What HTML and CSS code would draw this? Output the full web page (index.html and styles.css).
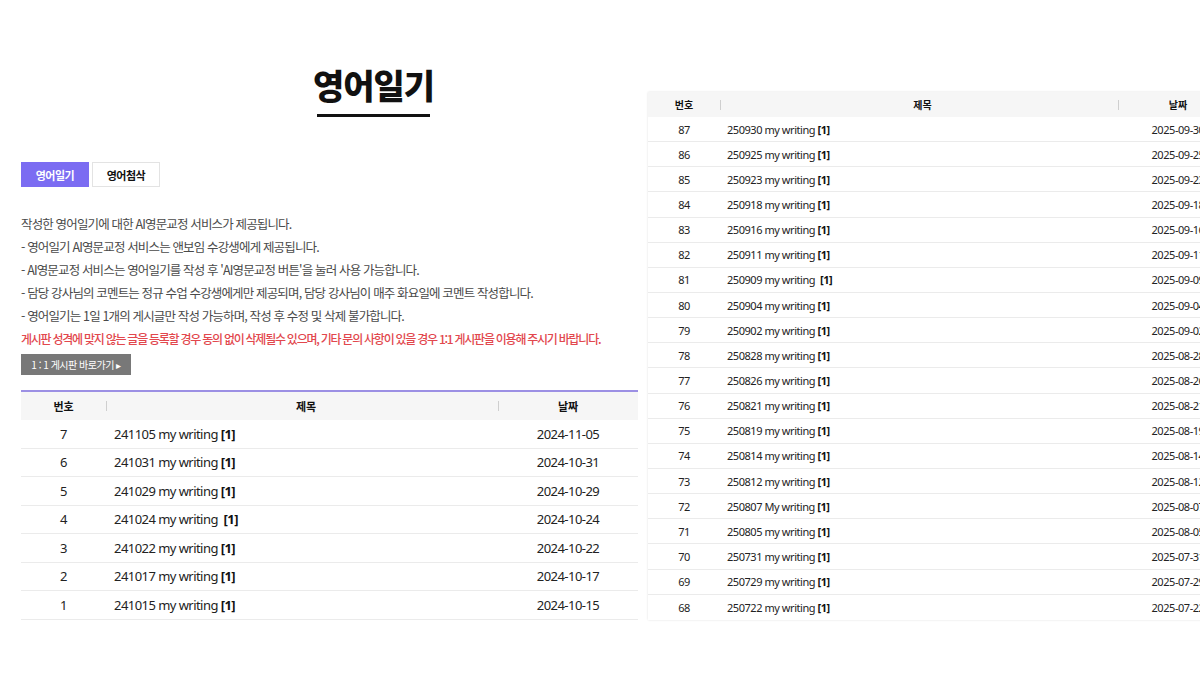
FILE: index.html
```html
<!DOCTYPE html>
<html lang="ko">
<head>
<meta charset="utf-8">
<title>영어일기</title>
<link rel="stylesheet" href="styles.css">
</head>
<body>
<div class="page">
  <section class="left">
    <div class="title-wrap">
      <h1 class="title">영어일기</h1>
      <div class="title-line"></div>
    </div>
    <div class="tabs">
      <div class="tab active">영어일기</div>
      <div class="tab">영어첨삭</div>
    </div>
    <div class="notes">
      <p>작성한 영어일기에 대한 AI영문교정 서비스가 제공됩니다.</p>
      <p>- 영어일기 AI영문교정 서비스는 앤보임 수강생에게 제공됩니다.</p>
      <p>- AI영문교정 서비스는 영어일기를 작성 후 'AI영문교정 버튼'을 눌러 사용 가능합니다.</p>
      <p>- 담당 강사님의 코멘트는 정규 수업 수강생에게만 제공되며, 담당 강사님이 매주 화요일에 코멘트 작성합니다.</p>
      <p>- 영어일기는 1일 1개의 게시글만 작성 가능하며, 작성 후 수정 및 삭제 불가합니다.</p>
      <p class="warn">게시판 성격에 맞지 않는 글을 등록할 경우 동의 없이 삭제될수 있으며, 기타 문의 사항이 있을 경우 1:1 게시판을 이용해 주시기 바랍니다.</p>
    </div>
    <div class="qna-btn">1 : 1 게시판 바로가기 ▸</div>
    <div class="board board-left">
      <div class="row head">
        <div class="c-no">번호</div>
        <div class="c-title">제목</div>
        <div class="c-date">날짜</div>
      </div>
      <div class="row"><div class="c-no">7</div><div class="c-title">241105 my writing <b>[1]</b></div><div class="c-date">2024-11-05</div></div>
      <div class="row"><div class="c-no">6</div><div class="c-title">241031 my writing <b>[1]</b></div><div class="c-date">2024-10-31</div></div>
      <div class="row"><div class="c-no">5</div><div class="c-title">241029 my writing <b>[1]</b></div><div class="c-date">2024-10-29</div></div>
      <div class="row"><div class="c-no">4</div><div class="c-title">241024 my writing &nbsp;<b>[1]</b></div><div class="c-date">2024-10-24</div></div>
      <div class="row"><div class="c-no">3</div><div class="c-title">241022 my writing <b>[1]</b></div><div class="c-date">2024-10-22</div></div>
      <div class="row"><div class="c-no">2</div><div class="c-title">241017 my writing <b>[1]</b></div><div class="c-date">2024-10-17</div></div>
      <div class="row"><div class="c-no">1</div><div class="c-title">241015 my writing <b>[1]</b></div><div class="c-date">2024-10-15</div></div>
    </div>
  </section>
  <section class="right">
    <div class="board board-right">
      <div class="row head">
        <div class="c-no">번호</div>
        <div class="c-title">제목</div>
        <div class="c-date">날짜</div>
      </div>
      <div class="row"><div class="c-no">87</div><div class="c-title">250930 my writing <b>[1]</b></div><div class="c-date">2025-09-30</div></div>
      <div class="row"><div class="c-no">86</div><div class="c-title">250925 my writing <b>[1]</b></div><div class="c-date">2025-09-25</div></div>
      <div class="row"><div class="c-no">85</div><div class="c-title">250923 my writing <b>[1]</b></div><div class="c-date">2025-09-23</div></div>
      <div class="row"><div class="c-no">84</div><div class="c-title">250918 my writing <b>[1]</b></div><div class="c-date">2025-09-18</div></div>
      <div class="row"><div class="c-no">83</div><div class="c-title">250916 my writing <b>[1]</b></div><div class="c-date">2025-09-16</div></div>
      <div class="row"><div class="c-no">82</div><div class="c-title">250911 my writing <b>[1]</b></div><div class="c-date">2025-09-11</div></div>
      <div class="row"><div class="c-no">81</div><div class="c-title">250909 my writing &nbsp;<b>[1]</b></div><div class="c-date">2025-09-09</div></div>
      <div class="row"><div class="c-no">80</div><div class="c-title">250904 my writing <b>[1]</b></div><div class="c-date">2025-09-04</div></div>
      <div class="row"><div class="c-no">79</div><div class="c-title">250902 my writing <b>[1]</b></div><div class="c-date">2025-09-02</div></div>
      <div class="row"><div class="c-no">78</div><div class="c-title">250828 my writing <b>[1]</b></div><div class="c-date">2025-08-28</div></div>
      <div class="row"><div class="c-no">77</div><div class="c-title">250826 my writing <b>[1]</b></div><div class="c-date">2025-08-26</div></div>
      <div class="row"><div class="c-no">76</div><div class="c-title">250821 my writing <b>[1]</b></div><div class="c-date">2025-08-21</div></div>
      <div class="row"><div class="c-no">75</div><div class="c-title">250819 my writing <b>[1]</b></div><div class="c-date">2025-08-19</div></div>
      <div class="row"><div class="c-no">74</div><div class="c-title">250814 my writing <b>[1]</b></div><div class="c-date">2025-08-14</div></div>
      <div class="row"><div class="c-no">73</div><div class="c-title">250812 my writing <b>[1]</b></div><div class="c-date">2025-08-12</div></div>
      <div class="row"><div class="c-no">72</div><div class="c-title">250807 My writing <b>[1]</b></div><div class="c-date">2025-08-07</div></div>
      <div class="row"><div class="c-no">71</div><div class="c-title">250805 my writing <b>[1]</b></div><div class="c-date">2025-08-05</div></div>
      <div class="row"><div class="c-no">70</div><div class="c-title">250731 my writing <b>[1]</b></div><div class="c-date">2025-07-31</div></div>
      <div class="row"><div class="c-no">69</div><div class="c-title">250729 my writing <b>[1]</b></div><div class="c-date">2025-07-29</div></div>
      <div class="row"><div class="c-no">68</div><div class="c-title">250722 my writing <b>[1]</b></div><div class="c-date">2025-07-22</div></div>
    </div>
  </section>
</div>
</body>
</html>
```

FILE: styles.css
```css
* { box-sizing: border-box; }
html, body {
  margin: 0;
  padding: 0;
  background: #fff;
  overflow: hidden;
}
body {
  width: 1200px;
  height: 675px;
  font-family: "Noto Sans CJK KR", "Noto Sans", sans-serif;
  color: #222;
}
.page {
  display: flex;
  align-items: flex-start;
  width: 1300px;
}
.left {
  width: 638px;
  padding-left: 21px;
  padding-top: 64px;
  flex: none;
}
.title-wrap {
  display: flex;
  flex-direction: column;
  align-items: center;
  padding-left: 88px;
}
.title {
  margin: 0;
  font-size: 34px;
  line-height: 42px;
  font-weight: 900;
  letter-spacing: -1px;
  color: #111;
}
.title-line {
  width: 113px;
  height: 3px;
  background: #111;
  margin-top: 8px;
}
.tabs {
  display: flex;
  gap: 3px;
  margin-top: 45px;
}
.tab {
  width: 68px;
  height: 25px;
  display: flex;
  align-items: center;
  justify-content: center;
  font-size: 11px;
  font-weight: 700;
  letter-spacing: -0.5px;
  color: #111;
  background: #fff;
  border: 1px solid #e3e3e3;
}
.tab.active {
  background: #7b6cf2;
  border-color: #7b6cf2;
  color: #fff;
}
.notes {
  margin-top: 25px;
}
.notes p {
  margin: 0;
  font-size: 12.5px;
  line-height: 23px;
  letter-spacing: -0.85px;
  color: #4a4a4a;
  white-space: nowrap;
}
.notes p.warn {
  color: #e2474d;
  font-weight: 500;
  font-size: 12px;
  letter-spacing: -1.25px;
}
.qna-btn {
  margin-top: 4px;
  width: 110px;
  height: 21px;
  background: #787878;
  color: #fff;
  font-size: 10px;
  letter-spacing: -0.5px;
  display: flex;
  align-items: center;
  justify-content: center;
}
.board-left {
  margin-top: 15px;
  width: 617px;
  border-top: 2px solid #9c90e4;
}
.board .row {
  display: grid;
  align-items: center;
  border-bottom: 1px solid #ebebeb;
  font-family: "Noto Sans", "Noto Sans CJK KR", sans-serif;
  color: #222;
}
.board .row.head {
  background: #f6f6f6;
  border-bottom: none;
  font-family: "Noto Sans CJK KR", sans-serif;
  font-weight: 700;
  color: #111;
}
.board .c-no { text-align: center; }
.board .c-date { text-align: center; white-space: nowrap; }
.board .head .c-title { text-align: center; }
.board .head .c-title,
.board .head .c-date {
  position: relative;
}
.board .head .c-title::before,
.board .head .c-date::before {
  content: "";
  position: absolute;
  left: 0;
  top: 50%;
  width: 1px;
  height: 10px;
  margin-top: -5px;
  background: #cfcfcf;
}
.board b { font-weight: 700; color: #111; }

.board-left .row {
  grid-template-columns: 85px 392px 140px;
  height: 28.5px;
  font-size: 13px;
  letter-spacing: -0.55px;
}
.board-left .row.head {
  height: 28px;
  font-size: 11px;
  letter-spacing: 0;
}
.board-left .c-title { padding-left: 8px; }

.right {
  flex: none;
  margin-left: 10px;
  padding-top: 92px;
}
.board-right {
  width: 590px;
  box-shadow: 0 0 2px rgba(0,0,0,0.12);
}
.board-right .row {
  grid-template-columns: 72px 398px 120px;
  height: 25.15px;
  font-size: 11px;
  letter-spacing: -0.45px;
}
.board-right .row.head {
  height: 25px;
  font-size: 10px;
  letter-spacing: 0;
}
.board-right .row:last-child { border-bottom: none; }
.board-right .c-title { padding-left: 7px; }
```
